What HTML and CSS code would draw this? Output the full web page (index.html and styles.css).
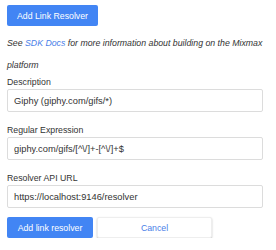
FILE: index.html
```html
<!DOCTYPE html>
<html lang="en">
<head>
    <meta charset="UTF-8">
    <meta name="viewport" content="width=device-width, initial-scale=1.0">
    <title>Link Resolvers</title>
    <link rel="stylesheet" href="styles.css">
</head>
<body>
    <div class="panel">
        <button class="btn btn-primary btn-add">Add Link Resolver</button>

        <p class="help">See <a href="#">SDK Docs</a> for more information about building on the Mixmax platform</p>

        <form class="resolver-form">
            <div class="field">
                <label class="field-label">Description</label>
                <input class="field-input" type="text" value="Giphy (giphy.com/gifs/*)">
            </div>
            <div class="field">
                <label class="field-label">Regular Expression</label>
                <input class="field-input" type="text" value="giphy.com/gifs/[^\/]+-[^\/]+$">
            </div>
            <div class="field">
                <label class="field-label">Resolver API URL</label>
                <input class="field-input" type="text" value="https://localhost:9146/resolver">
            </div>
            <div class="actions">
                <button type="button" class="btn btn-primary btn-submit">Add link resolver</button>
                <button type="button" class="btn btn-cancel">Cancel</button>
            </div>
        </form>
    </div>
</body>
</html>
```

FILE: styles.css
```css
body {
    font-family: "Liberation Sans", Arial, sans-serif;
    font-size: 8.75px;
    color: #333;
    background-color: #fff;
    margin: 0;
    padding: 0;
}
.panel {
    padding: 5px 13px 0 7px;
}
.btn {
    display: inline-block;
    height: 21px;
    padding: 0;
    border: none;
    border-radius: 2px;
    font-family: inherit;
    font-size: 8.75px;
    cursor: pointer;
}
.btn-primary {
    background-color: #4285f4;
    color: white;
}
.btn-add {
    width: 91px;
}
.help {
    font-style: italic;
    line-height: 22px;
    margin: 6px -2px 0 0;
}
.help a {
    color: #4a80e8;
    text-decoration: none;
}
.resolver-form {
    margin: 0;
}
.field {
    margin-bottom: 12px;
}
.field:nth-child(3) {
    margin-bottom: 9px;
}
.field-label {
    display: block;
    line-height: 12px;
    margin-bottom: 1px;
}
.field-input {
    display: block;
    box-sizing: border-box;
    width: 100%;
    height: 23px;
    padding: 0 6px;
    border: 1px solid #dcdcdc;
    border-radius: 2px;
    font-family: inherit;
    font-size: 9.3px;
    color: #333;
}
.actions {
    display: flex;
    gap: 4px;
}
.btn-submit {
    width: 86px;
}
.btn-cancel {
    width: 115px;
    background-color: white;
    color: #4a80e8;
    box-shadow: 0 1px 2px rgba(0, 0, 0, 0.25);
    border: 1px solid #eee;
}
```
